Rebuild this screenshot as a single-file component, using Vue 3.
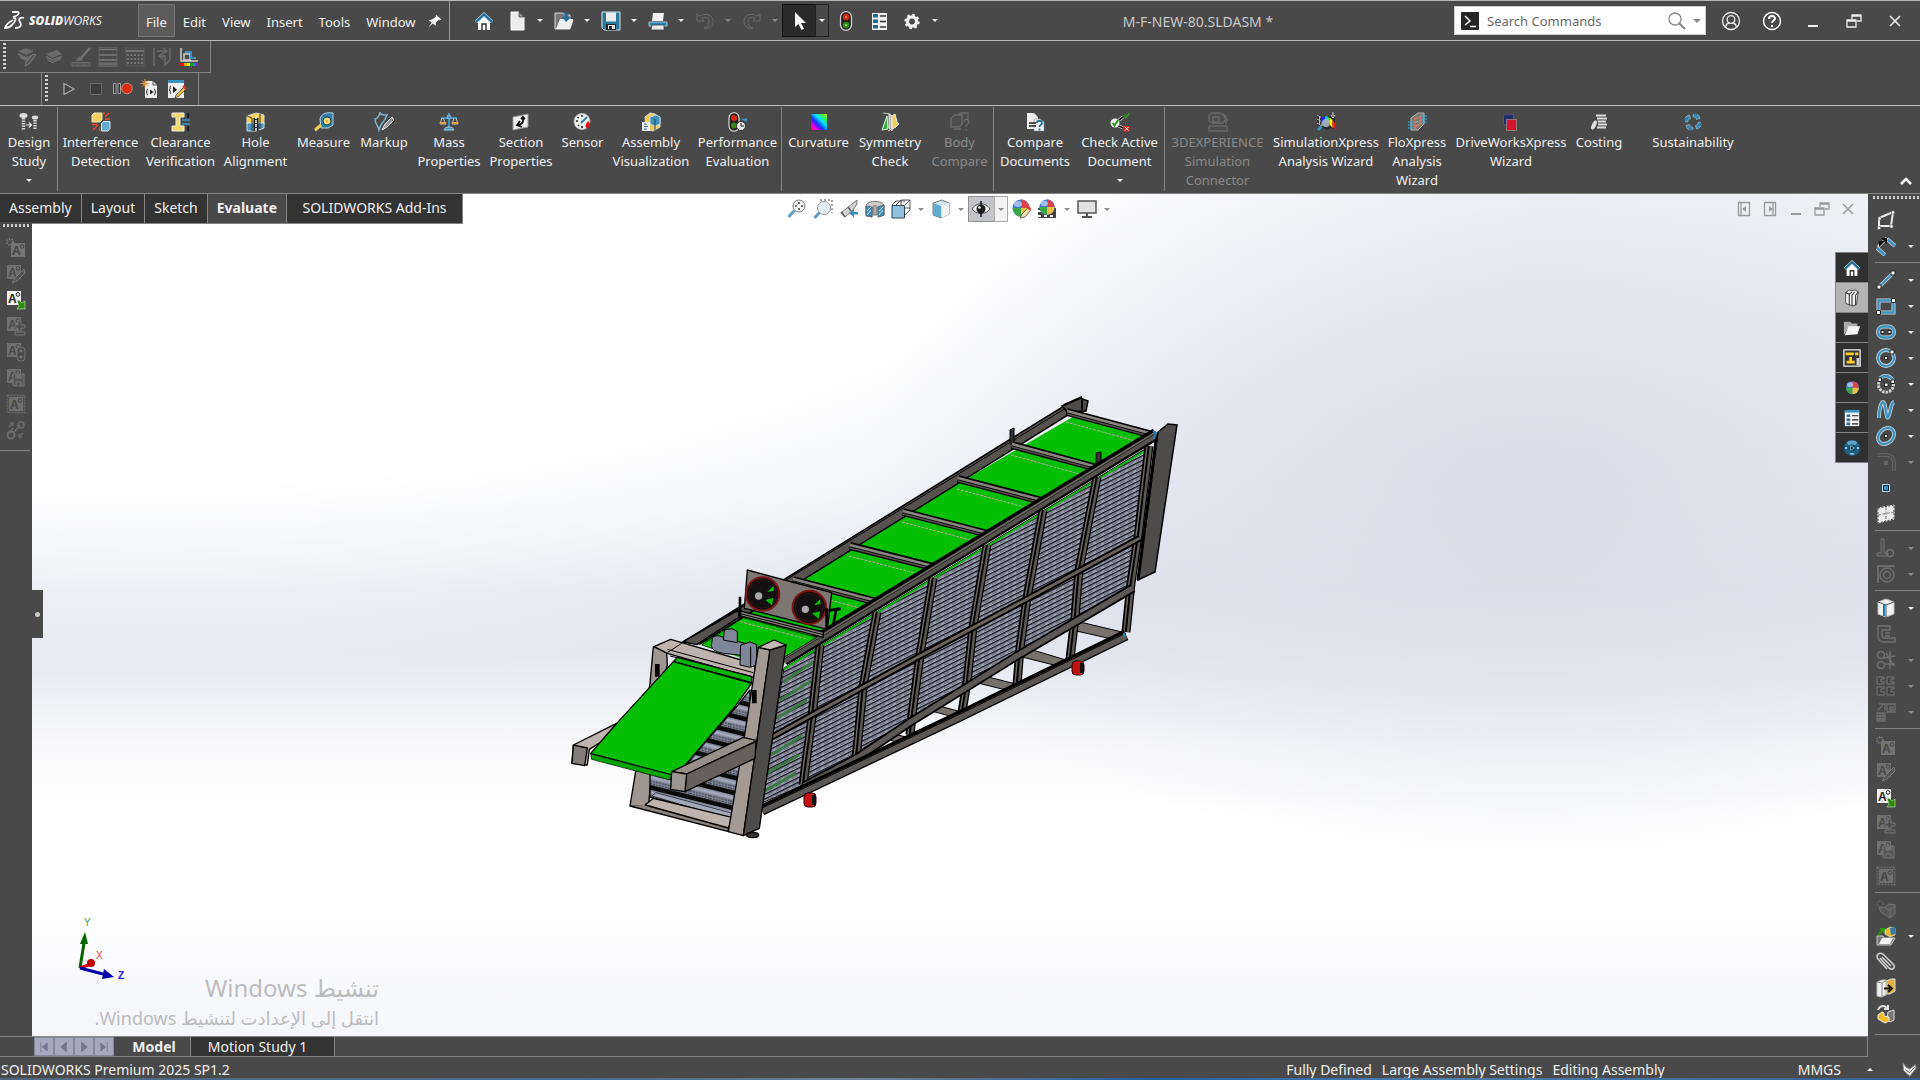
<script setup>
import { h } from 'vue'

const O = '#d2d2d2'
const B = '#3b93c4'
const noteBox = (x, y, fill, ink) =>
  `<rect x="${x}" y="${y}" width="14" height="14" fill="${fill}"/><text x="${x + 1}" y="${y + 12}" font-family="Liberation Sans" font-weight="bold" font-size="12" fill="${ink}">A</text><circle cx="${x + 11}" cy="${y + 3.5}" r="1.8" fill="none" stroke="${ink}"/>`
const balls = '<circle cx="10" cy="9" r="8.5" fill="#3e7bd0"/><path d="M10 9V.5A8.5 8.5 0 0 1 18.500 9z" fill="#d9434a"/><path d="M10 9H1.500A8.500 8.500 0 0 0 10 17.500z" fill="#3aa648"/><path d="M10 9h8.500A8.500 8.500 0 0 1 10 17.500z" fill="#e8bf4a"/><ellipse cx="7" cy="5" rx="4" ry="3" fill="#fff" opacity=".5"/>'

const icons = {
  home: `<path d="M4 10v9h12v-9l-6-6z" fill="#fff"/><path d="M8 19v-6h4v6" fill="none" stroke="#333" stroke-width="1.500"/><path d="M2 11L10 3.500l8 7.500" fill="none" stroke="#b5dcee" stroke-width="3.600"/><path d="M2 11L10 3.500l8 7.500" fill="none" stroke="#1f6a94" stroke-width="2.300"/>`,
  doc: `<path d="M4 1h8l5 5v13H4z" fill="#ececec" stroke="#fff"/><path d="M12 1v5h5z" fill="#999" stroke="#333" stroke-width=".7"/>`,
  open: `<path d="M1 2h9l1 2h5v5l3 0-3 9H1z" fill="#777" stroke="#ddd"/><path d="M2 18L6 8h13l-3 10z" fill="#eee"/><path d="M8 1c5 0 6 2 6 5h3l-5 5-4-5h3c0-3-1-4-3-5z" fill="#1c6e9e"/>`,
  save: `<path d="M1 1h18v18H3l-2-2z" fill="#2b789f" stroke="#cfe6f0" stroke-width="1"/><path d="M5 1.500h10v9H5z" fill="#eee"/><path d="M5 13h10v6H5z" fill="#222"/><path d="M7 14h7v4H7z" fill="#eee"/><path d="M8 15h3v3H8z" fill="#222"/>`,
  print: `<path d="M5 2h11l-1 8H4z" fill="#f2f2f2"/><path d="M1 11h18v4H1z" fill="#2f86b5" stroke="#b9dded" stroke-width=".8"/><path d="M4 14h12v5H3z" fill="#e8e8e8" stroke="#333" stroke-width=".7"/>`,
  undo: `<path d="M2 3v7h7L7 7c4-2 7 0 7 4s-2 5-5 6c6 1 9-2 9-7S12 1 5 5z" fill="#4a4a4a" stroke="#6b6b6b"/>`,
  redo: `<path d="M18 3v7h-7l2-3c-4-2-7 0-7 4s2 5 5 6c-6 1-9-2-9-7S8 1 15 5z" fill="#4a4a4a" stroke="#6b6b6b"/>`,
  cursor: `<path d="M6 1v15l3.500-3 3 6 2.500-1.200-3-5.800h5z" fill="#f4f4f4"/>`,
  light: `<rect x="4.500" y=".7" width="11" height="18.600" rx="5.500" fill="#222" stroke="#ccc" stroke-width="1.300"/><circle cx="10" cy="6" r="3.200" fill="#d8260f"/><circle cx="10" cy="14" r="3.200" fill="#2f8c16"/><circle cx="10" cy="6" r="1" fill="#ff9b80"/><circle cx="10" cy="14" r="1" fill="#9be078"/>`,
  options: `<path d="M3 2h15v17H3z" fill="#eee"/><path d="M4 3h5v3.500H4zM4 8.500h5V12H4zM4 14h5v3.500H4z" fill="#1f6a94"/><path d="M11 5h6M11 10.500h6M11 16h6" stroke="#333" stroke-width="1.300"/>`,
  gear: `<circle cx="10" cy="10.500" r="4.600" fill="none" stroke="#f2f2f2" stroke-width="3.400"/><circle cx="10" cy="10.500" r="6.600" fill="none" stroke="#f2f2f2" stroke-width="2.200" stroke-dasharray="2.590 2.590"/>`,
  pin: `<path d="M11 2l7 6-2 1-1-1-4 4 0 4-4-3-5 5 4-6-4-3 4-1 5-3z" fill="#fff"/>`,
  user: `<circle cx="10" cy="10" r="8.500" fill="none" stroke="#eee" stroke-width="1.300"/><circle cx="10" cy="8.500" r="3.800" fill="none" stroke="#eee" stroke-width="1.300"/><path d="M4.500 16c1-4 3-4 4-4M15.500 16c-1-4-3-4-4-4" fill="none" stroke="#eee" stroke-width="1.300"/>`,
  help: `<circle cx="10" cy="10" r="8.500" fill="none" stroke="#fff" stroke-width="1.500"/><path d="M7 8c0-4 6-4 6-.5 0 2-3 2-3 4.500M10 14v2" fill="none" stroke="#fff" stroke-width="2"/>`,
  min: `<path d="M5 15h10" stroke="currentColor" stroke-width="2"/>`,
  restore: `<path d="M8 8V4h9v6h-4M3 9h9v7H3zM8 5h9M3 10h9" fill="none" stroke="currentColor" stroke-width="1.300"/>`,
  close: `<path d="M5 5l10 10M15 5L5 15" stroke="currentColor" stroke-width="1.500"/>`,
  paneL: `<path d="M4.500 3.500h11v13h-11zM7 4v12" fill="none" stroke="currentColor" stroke-width="1.300"/><path d="M12 7v6l-4-3z" fill="currentColor"/>`,
  paneR: `<path d="M4.500 3.500h11v13h-11zM13 4v12" fill="none" stroke="currentColor" stroke-width="1.300"/><path d="M9 7v6l4-3z" fill="currentColor"/>`,
  prompt: `<rect x="1" y="1" width="18" height="18" rx="1" fill="#252525"/><path d="M5 5l5 5-5 4" fill="none" stroke="#fff" stroke-width="1.500"/><path d="M10 15.500h6" stroke="#fff" stroke-width="1.500"/>`,
  glass: `<circle cx="8" cy="8" r="6" fill="none" stroke="#888" stroke-width="1.300"/><path d="M12.500 12.500L18 18" stroke="#888" stroke-width="2.200"/>`,
  up: `<path d="M5 13l5-5 5 5" fill="none" stroke="#fff" stroke-width="2.500"/>`,
  // macro and layer strip
  layersEdit: `<path d="M1 4l8-3 8 3-8 4z" fill="#6a6a6a"/><path d="M1 7l8 4 5-2M3 10l6 3 3-1" fill="none" stroke="#707070" stroke-width="1.600"/><path d="M19 8l-7 9-4 2 1-4 7-8z" fill="#555" stroke="#7c7c7c"/>`,
  layers: `<path d="M2 7l11-4 5 4-10 4z" fill="#6a6a6a"/><path d="M2 9.500l6 3.500 10-3.500M3 12l5 3.500 9-4" fill="none" stroke="#707070" stroke-width="1.500"/>`,
  brush: `<path d="M19 1l-9 10" stroke="#777" stroke-width="2"/><path d="M11 10c-2-2-4 0-6 4h5c2-1 2-3 1-4z" fill="#6a6a6a"/><path d="M1 15.500h18v3.500H1z" fill="#555" stroke="#6b6b6b"/><path d="M7 15v4M13 15v4" stroke="#6b6b6b"/>`,
  thick: `<path d="M1 2.500h18M1 8h18M1 13h18" stroke="#7b7b7b" stroke-width="1.500"/><path d="M1 17h18" stroke="#6c6c6c" stroke-width="3"/><path d="M1 .5h18v19H1z" fill="none" stroke="#626262"/>`,
  dash: `<path d="M1 1h18v18H1z" fill="none" stroke="#5e5e5e"/><path d="M1 4h18" stroke="#747474" stroke-width="2"/><path d="M2 8h16M2 12h16M2 16h16" stroke="#747474" stroke-width="2" stroke-dasharray="2 1.500"/>`,
  swap: `<path d="M2 1v18M5 4h9M11 1l4 3-4 3M18 1v12l-5 5V9H8M11 6L7 9l4 3" fill="none" stroke="#6c6c6c" stroke-width="1.500"/>`,
  colorDisp: `<path d="M2 1v13h17M5 7h6v6H5z" fill="none" stroke="#cfcfcf" stroke-width="1.500"/><path d="M6 5h6v6h5" fill="none" stroke="${B}" stroke-width="2"/><path d="M1 16h4v3H1z" fill="#e11"/><path d="M5 16h3v3H5z" fill="#fa0"/><path d="M8 16h3v3H8z" fill="#ef0"/><path d="M11 16h3v3h-3z" fill="#1a2"/><path d="M14 16h2.500v3H14z" fill="#28e"/><path d="M16.500 16H19v3h-2.500z" fill="#82c"/>`,
  play: `<path d="M5 4.500v11l10-5.500z" fill="#444" stroke="#aaa" stroke-width="1.300"/>`,
  stop: `<path d="M4.500 4.500h11v11h-11z" fill="#3d3d3d" stroke="#6a6a6a"/>`,
  record: `<path d="M.5 4.500H3v10H.5zM5 4.500h2.500v10H5z" fill="#333" stroke="#bbb" stroke-width=".8"/><circle cx="14" cy="9.500" r="5.300" fill="#dd2b08" stroke="#bbb" stroke-width=".7"/>`,
  macroNew: `<path d="M5 2h8l4 4v13H5z" fill="#eee"/><path d="M13 2v4h4" fill="none" stroke="#555"/><path d="M5 0v9M.5 4.500h9M2 1.500l6 6M8 1.500l-6 6" stroke="#e8973a"/><path d="M8 10c-2 0 0 3-2 3 2 0 0 3 2 3M14 10c2 0 0 3 2 3-2 0 0 3-2 3" fill="none" stroke="#222"/><path d="M10 10.500v5l3.500-2.500z" fill="#222"/>`,
  macroEdit: `<path d="M1 2h16v17H1z" fill="#eee"/><path d="M1 1h16v3H1z" fill="${B}"/><path d="M6 7v7l4-3z" fill="#222"/><path d="M4 7c-2 0 0 3-1.500 4 1.500 1 0 4 1.500 4" fill="none" stroke="#222"/><path d="M17 8l-8 8-1 3 4-2 7-7z" fill="#f2c34c" stroke="#333" stroke-width=".7"/><path d="M16 7l3 3" stroke="#d33" stroke-width="2.500"/>`,
  // evaluate commands
  study: `<ellipse cx="4.500" cy="3.500" rx="4" ry="2.500" fill="#ddd"/><ellipse cx="16" cy="5.500" rx="3.200" ry="2" fill="#ddd"/><path d="M4.500 6v12M16 8v10" stroke="${O}" stroke-width="3.500" stroke-dasharray="1.500 1"/><path d="M7 13h5M10 10.500l2.500 2.500-2.500 2.500" fill="none" stroke="#eee" stroke-width="1.200"/>`,
  interf: `<path d="M1 3l2-2h8v7l-2 2H1z" fill="#f5cf60" stroke="#e9e3c4"/><path d="M10.500 11l2-1.500H19v7L17 19h-6.500z" fill="#65a9cf" stroke="#d3e8f2"/><path d="M14 5l4-4M14 7h5M13 3V0M7 13l-5 5M6 12.500H1M8.500 15v4" stroke="#f04a2a" stroke-width="1.300"/>`,
  clear: `<path d="M1 1h12v4H9v9h4v5H1v-5h4V5H1z" fill="#f5d765" stroke="#eee"/><path d="M11 8h8M11 12h8" stroke="${B}" stroke-width="1.500"/><path d="M17 1v5M17 19v-5" stroke="#111" stroke-width="1.500"/>`,
  hole: `<path d="M1 4l9-3 8 2v9H1z" fill="#f3cf50" stroke="#ddd"/><path d="M1 11h17v5l-8 3H1z" fill="#4b96c0" stroke="#cfe3ee"/><path d="M10 6v13" stroke="#222" stroke-width="5"/><path d="M10 4v15" stroke="#f4f4f4" stroke-width="1.500" stroke-dasharray="3 1"/><path d="M1 4l5 2v13M14 2v15" fill="none" stroke="#333"/>`,
  measure: `<path d="M6 7c1-5 6-7 13-6v12l-5 3H7z" fill="#2d7da8" stroke="#b8d8e6"/><circle cx="13" cy="9" r="4" fill="#f0dc88" stroke="#245"/><circle cx="13" cy="9" r="1.500" fill="#e9b93a"/><path d="M1 18l6-5" stroke="#f0c93b" stroke-width="3"/><path d="M1 19l6-5" stroke="#eee" stroke-dasharray="1 1"/>`,
  markup: `<path d="M6 1c2 3 4 2 7 2-1 3-2 5-4 7s-3 5-4 8c-1-5-4-6-4-11 3 0 4-3 5-6z" fill="none" stroke="#82b7d2" stroke-width="1.500"/><path d="M18 5l-7 7-3 6 5-3 7-7z" fill="#999" stroke="#eee"/>`,
  mass: `<path d="M10 1v14M2 6h16" stroke="${B}" stroke-width="2"/><circle cx="10" cy="5" r="2" fill="${B}" stroke="#cde" stroke-width=".6"/><path d="M5 18c1-4 9-4 10 0z" fill="${B}" stroke="#aed4e6"/><path d="M3 6l-2 6h6l-3-6M15 6l-2 6h6l-2-6" fill="none" stroke="#ddd" stroke-width=".8"/><path d="M.5 10h7c-1 3-6 3-7 0zM12.500 10h7c-1 3-6 3-7 0z" fill="#e3a342"/>`,
  section: `<path d="M2 5l15-3v13L2 18z" fill="#f0f0f0" stroke="#999"/><path d="M12 6v3c0 3-2 3-5 4M9 9l-3 4 5 2M10 7l2-2 2 2" fill="none" stroke="#111" stroke-width="1.800"/>`,
  sensor: `<circle cx="9" cy="9.500" r="8" fill="#eee" stroke="#bbb"/><path d="M9 3v2M3 9h2M4.500 5l1.200 1.200M5 14l1-1M9 16v-2" stroke="#222" stroke-width="1.500"/><path d="M8 11l6-6" stroke="#2d7da8" stroke-width="1.800"/><path d="M13 12l2-3c3 3 2 6 0 7s-3-2-2-4z" fill="#d11"/>`,
  asmViz: `<path d="M4 5l5-4 5 1 5 4v9l-7 4-7-2z" fill="#f2cb50" stroke="#ddd"/><path d="M9 5l6-2 4 2v7l-5 2-5-2z" fill="#3d8fb8" stroke="#b9d9e8"/><path d="M14 7v11" stroke="#246"/><path d="M1 10h8v9H1z" fill="#f2f2f2"/><path d="M3 12h3M3 14.500h4M3 17h3" stroke="#2d6da0"/>`,
  perf: `<rect x="1" y=".7" width="10" height="18.500" rx="5" fill="#222" stroke="#ccc" stroke-width="1.300"/><circle cx="6" cy="6" r="3" fill="#d8260f"/><circle cx="6" cy="13.500" r="3" fill="#2f8c16"/><circle cx="13" cy="14" r="4.500" fill="#e9e9e9" stroke="#333"/><path d="M13 11v3h3" fill="none" stroke="#111"/><path d="M11 7c3 0 6 2 8 3V6l-4 1z" fill="${B}"/>`,
  curv: `<defs><linearGradient id="rb" x1="1" y1="0" x2="0" y2="1"><stop offset="0" stop-color="#ffea00"/><stop offset=".2" stop-color="#3cf04a"/><stop offset=".4" stop-color="#00e0ff"/><stop offset=".6" stop-color="#1b2cff"/><stop offset=".8" stop-color="#ff00e0"/><stop offset="1" stop-color="#ff0030"/></linearGradient></defs><path d="M1.500 1.500h17v17h-17z" fill="url(#rb)" stroke="#444"/>`,
  sym: `<path d="M3 1l7 1v16l-2 1" fill="none" stroke="#ccc"/><path d="M9 2l3 2v15l-3-3z" fill="#b5b5b5" stroke="#eee"/><path d="M2 18L7 4l1 13z" fill="#30b040" stroke="#dfd"/><path d="M12 4l3-2 2 8 2 2-3 3-4 2z" fill="#f0cf5a" stroke="#eee"/>`,
  bodyCmp: `<path d="M1 6l4-3h7v9l-3 3H1zM8 3l3-2h7v9M14 10c0-4 5-3 5 0 0 2-3 2-3 5M16 17v2M4 17h7" fill="#4d4d4d" stroke="#6b6b6b" stroke-width="1.300"/>`,
  cmpDoc: `<path d="M2 1h7l4 4v12H2z" fill="#eee"/><path d="M9 7h6l4 3v9H9z" fill="#f6f6f6" stroke="#888" stroke-width=".6"/><path d="M4 11h7M4 14h7" stroke="#222" stroke-width="1.500"/><path d="M12 11c0-3 5-3 5 0 0 2-2.500 1.500-2.500 4M14.500 16.500v2" fill="none" stroke="#1c6ea0" stroke-width="1.800"/>`,
  chkDoc: `<circle cx="5" cy="11" r="4.500" fill="#f2f2f2"/><path d="M2.500 11l2 2.500L8 8M14 3l2 2.500L19.500 1" fill="none" stroke="#2a9a1a" stroke-width="2"/><path d="M9 8l4-3M9 14l4 2" stroke="#eee" stroke-width="3"/><path d="M9 8l4-3M9 14l4 2" stroke="#111" stroke-width="1.800"/><path d="M14 14h5.500v5.500H14z" fill="#d22"/><path d="M15 15l3.500 3.500M18.500 15L15 18.500" stroke="#fff"/>`,
  dx: `<path d="M1 3l3-2h8l3 2 3 4-3 4H4L1 9zM1 14h18v5H1zM5 5h6v5H5zM13 2c3 0 5 2 5 5M16 8l2 3 2-4" fill="#4d4d4d" stroke="#696969" stroke-width="1.300"/>`,
  simx: `<path d="M1 2l5 3 5 0 8-3v15l-5-1-3 2-4-2-6-3z" fill="#2b2b2b"/><path d="M1 3l5 3v8l-5-3M1 7l5 3M3.500 4v8" fill="none" stroke="#bbb"/><path d="M5 5h4v5H5z" fill="#22f"/><path d="M9 4.500h3V8H9z" fill="#0cf"/><path d="M12 5l2 1v6l-2-2z" fill="#2e2"/><path d="M14 6l2.500 2v8L14 13z" fill="#ff0"/><path d="M16.500 8L19 11v6l-2.500-2z" fill="#f22"/><circle cx="10" cy="11" r="4" fill="#a9bdca" opacity=".9"/><path d="M2 18l3.500-3.500" stroke="${B}" stroke-width="3"/><path d="M17 0v4M15 3l2 3 2-3" stroke="#ddd" fill="none"/>`,
  flox: `<path d="M4 6l7-5h6v11l-6 6H4z" fill="#77786f" stroke="#bbb"/><path d="M1 10h6M1 13h6M1 16h6M14 4h6M14 7h6M14 10h6" stroke="#28b4f0"/><path d="M7 7l8-3M7 11l8-3M7 15l8-4" stroke="#a0a898"/><path d="M8 7v9l5-4V5z" fill="none" stroke="#e06a5a" stroke-width="1.300"/>`,
  drive: `<path d="M2.500 2.500h10v10h-10z" fill="#23306e" stroke="#55608e" stroke-width=".6"/><path d="M5.500 7.500h10v11h-10z" fill="#d3142c" stroke="#999" stroke-width=".7"/>`,
  costing: `<path d="M7 3.500h10M8 6.500h10M7 9.500h10M9 12.500h9M8 15.500h9" stroke="#ddd" stroke-width="2"/><ellipse cx="5" cy="13" rx="2.600" ry="5.500" transform="rotate(25 5 13)" fill="#ddd" stroke="#444"/>`,
  sustain: `<g fill="#3a86ae" stroke="#a8d0e2" stroke-width=".6"><path id="sl" d="M10.500 1.500c4 0 6 2 6.500 5l-3.500 1c-.5-1.500-1.500-2.500-3.500-3z"/><path d="M10.500 1.500c4 0 6 2 6.500 5l-3.500 1c-.5-1.500-1.500-2.500-3.500-3z" transform="rotate(90 10 10)"/><path d="M10.500 1.500c4 0 6 2 6.500 5l-3.500 1c-.5-1.500-1.500-2.500-3.500-3z" transform="rotate(180 10 10)"/><path d="M10.500 1.500c4 0 6 2 6.500 5l-3.500 1c-.5-1.500-1.500-2.500-3.500-3z" transform="rotate(270 10 10)"/></g><circle cx="10" cy="10" r="8.500" fill="none" stroke="#1d4c66" stroke-dasharray="4 9.350"/>`,
  // heads-up view tools
  zoomFit: `<circle cx="12" cy="7" r="6" fill="#f4f4f4" stroke="#777"/><path d="M12 3v2M12 9v2M8 7h2M14 7h2" stroke="#444" stroke-width="1.600"/><path d="M7.500 11.500L1.500 18" stroke="#5f9fc4" stroke-width="3.200"/>`,
  zoomArea: `<path d="M7 1h12v13" fill="none" stroke="#555" stroke-dasharray="2 2"/><circle cx="11" cy="9" r="6.500" fill="#e8eef2" stroke="#999"/><path d="M6.500 13.500L1.500 19" stroke="#5f9fc4" stroke-width="3.200"/>`,
  prevView: `<path d="M18 1l-6 5-9 7 3 5 8-7 4-6z" fill="#d4d4d4" stroke="#777"/><path d="M2 13l4 5M9 8l3 4" stroke="#666" stroke-width="1.600"/><path d="M19 15.500h-4v3l-5-4.500 5-4v3h4z" fill="#3f8fbb"/>`,
  sectView: `<path d="M1 6c3-5 15-5 18 0v10l-5 2v-9H7v9l-6-1z" fill="#ccc" stroke="#777"/><path d="M8 8c0-2 4-2 4 0v8H8z" fill="#aaa" stroke="#777"/><path d="M1 7l6 1v10l-6-2zM13 8l6-2v10l-6 2z" fill="#3f8fbb" stroke="#567"/><path d="M2 12l4-4M2 16l4-5M14 16l4-5M14 12l4-4" stroke="#cde"/>`,
  orient: `<path d="M5 6l5-5h9v10l-5 5M14 6l5-5M1 6l4-4h9M10 1v5M14 9h5" fill="none" stroke="#555"/><path d="M1 6.500h12.500V19H1z" fill="#8ec3de" stroke="#345"/>`,
  dispStyle: `<path d="M2 4l9-3 7 3v11l-8 4-8-3z" fill="#cfe4ee" stroke="#777"/><path d="M2 4l8 3v12l-8-3z" fill="#62abd0"/><path d="M11 7l7-3v11l-7 4z" fill="#f1f1f1"/>`,
  eye: `<path d="M1 10c4-7 14-7 18 0-4 6-14 6-18 0z" fill="#eee" stroke="#555"/><circle cx="10" cy="10" r="4.500" fill="#222"/><path d="M10 2v16" stroke="#111" stroke-width="1.500"/><circle cx="8.500" cy="8.500" r="1.300" fill="#fff"/>`,
  appear: balls + `<path d="M18 8l-7 7-2 4 5-1 6-7z" fill="#f3e3a8" stroke="#444" stroke-width=".8"/><path d="M17 8l3 3" stroke="#d44" stroke-width="2.500"/>`,
  scene: `<path d="M1 9h18v10H1z" fill="#444"/><path d="M1 12h18M1 17h18" stroke="#fff" stroke-dasharray="3 3" stroke-width="2"/><g transform="translate(1 0) scale(.9)">${balls}</g>`,
  monitor: `<path d="M1 2h18v12H1z" fill="#e2e2e2" stroke="#555" stroke-width="1.500"/><path d="M10 14v3M5 18h10" stroke="#555" stroke-width="2"/>`,
  // annotation views
  nNew: noteBox(5, 5, '#747474', '#454545') + '<circle cx="4" cy="4" r="3" fill="none" stroke="#777" stroke-width="2" stroke-dasharray="1.500 1"/>',
  nEdit: noteBox(1, 1, '#707070', '#484848') + '<path d="M18 5l-9 9-3 5 5-2 8-8z" fill="#555" stroke="#7a7a7a"/>',
  nIns: noteBox(1, 1, '#f2f2f2', '#222') + '<path d="M11 11l2-1 3 3 3-2v8h-8l2-3z" fill="#2d8a0a" stroke="#cfe8c4" stroke-width=".6"/>',
  nAdd: noteBox(1, 1, '#707070', '#484848') + '<path d="M12 5h3v4h4v3h-4v3h-3v-3H9V9h3zM9 16h10v3H9z" fill="#4d4d4d" stroke="#777"/>',
  nLight: noteBox(1, 1, '#707070', '#484848') + '<rect x="11" y="5" width="8" height="14" rx="3.500" fill="#4a4a4a" stroke="#777"/><circle cx="15" cy="9" r="1.500" fill="#777"/><circle cx="15" cy="15" r="1.500" fill="#777"/>',
  nSave: noteBox(1, 1, '#707070', '#484848') + '<path d="M7 6h11v12H8l-1-1zM10 6v4h6V6M10 18v-4h5v4" fill="#555" stroke="#777"/>',
  nFrame: '<path d="M1.500 1.500h17v17h-17z" fill="none" stroke="#666" stroke-width="2" stroke-dasharray="2 1"/>' + noteBox(3, 3, '#6e6e6e', '#454545'),
  nLink: '<path d="M3 7l4-4M4 3h3v3M17 13l-4 4M16 17h-3v-3M8 12l6-7M7 8l-3 4" fill="none" stroke="#6c6c6c" stroke-width="1.500"/><circle cx="15" cy="5" r="3" fill="none" stroke="#6c6c6c" stroke-width="1.500"/><circle cx="5" cy="15" r="3.500" fill="none" stroke="#6c6c6c" stroke-width="2"/>',
  // sketch tools
  sketch: `<path d="M3 18V8l14-6-2 14H3z" fill="none" stroke="#eee" stroke-width="2"/><path d="M1.500 16.500h3v3h-3zM14 15h3v3h-3zM15.500 1h3v3h-3zM2 7h3v3H2z" fill="#fff" stroke="#555" stroke-width=".6"/>`,
  dim: `<path d="M1 12l8 7M11 3l8 7" stroke="${O}" stroke-width="4"/><path d="M1 12l8 7M11 3l8 7" stroke="${B}" stroke-width="2.600"/><path d="M2 11L11 2" stroke="${O}" stroke-width="3"/><path d="M3 11V5h6zM5 2h6v6z" fill="#111"/>`,
  line: `<path d="M3 17L17 3" stroke="${O}" stroke-width="3.800"/><path d="M3 17L17 3" stroke="${B}" stroke-width="2.200"/><path d="M1 15h4v4H1zM15 1h4v4h-4z" fill="#fff" stroke="#222"/>`,
  rect: `<path d="M2.500 4.500h15v12h-15z" fill="none" stroke="${O}" stroke-width="4"/><path d="M2.500 4.500h15v12h-15z" fill="none" stroke="${B}" stroke-width="2.400"/><path d="M.5 14.500h4v4h-4zM15.500 2.500h4v4h-4z" fill="#fff" stroke="#222"/>`,
  slot: `<rect x="2" y="4.500" width="16" height="11" rx="5.500" fill="none" stroke="${O}" stroke-width="4"/><rect x="2" y="4.500" width="16" height="11" rx="5.500" fill="none" stroke="${B}" stroke-width="2.400"/><path d="M5 8.500h3v3H5zM12 8.500h3v3h-3z" fill="#fff" stroke="#222"/>`,
  circle: `<circle cx="10" cy="10" r="8" fill="none" stroke="${O}" stroke-width="3.800"/><circle cx="10" cy="10" r="8" fill="none" stroke="${B}" stroke-width="2.200"/><path d="M8.500 8.500h3v3h-3zM14 2h4v4h-4z" fill="#fff" stroke="#222"/>`,
  arc: `<path d="M3 8a7.500 7.500 0 1 0 14 0" fill="none" stroke="${O}" stroke-width="3" stroke-dasharray="2.500 1"/><path d="M3 6c4-6 11-5 14 1" fill="none" stroke="${O}" stroke-width="3.800"/><path d="M3 6c4-6 11-5 14 1" fill="none" stroke="${B}" stroke-width="2.400"/><path d="M2 4h3.500v3.500H2zM8.500 9H12v3.500H8.500zM15 6h3.500v3.500H15z" fill="#fff" stroke="#222"/>`,
  spline: `<path d="M3 18C3 7 7-4 9 6s2 15 4 9 2-12 5-13" fill="none" stroke="${O}" stroke-width="4"/><path d="M3 18C3 7 7-4 9 6s2 15 4 9 2-12 5-13" fill="none" stroke="${B}" stroke-width="2.400"/>`,
  ellipse: `<ellipse cx="10" cy="10" rx="9" ry="7" transform="rotate(-45 10 10)" fill="none" stroke="${O}" stroke-width="3.800"/><ellipse cx="10" cy="10" rx="9" ry="7" transform="rotate(-45 10 10)" fill="none" stroke="${B}" stroke-width="2.200"/><path d="M8.500 8.500h3v3h-3z" fill="#fff" stroke="#222"/>`,
  fillet: `<path d="M1 3h8c6 0 9 3 9 8v8" fill="none" stroke="#6c6c6c" stroke-width="3.600"/><path d="M1 3h8c6 0 9 3 9 8v8" fill="none" stroke="#4d4d4d" stroke-width="2"/><path d="M8 9h4v4H8z" fill="#666"/>`,
  point: `<path d="M6.500 6.500h7v7h-7z" fill="${B}" stroke="#b7dcec"/><path d="M7.500 7.500h5v5h-5z" fill="none" stroke="#124"/>`,
  plane: `<path d="M2 4l16-3v14L2 19z" fill="#ececec" stroke="#fff"/><path d="M2 4l16-3v14L2 19z" fill="none" stroke="#333" stroke-dasharray="2 1.500"/><path d="M10 3v14M2 11l16-3" stroke="#777" stroke-dasharray="3 1.500"/>`,
  trim: `<path d="M5 1h3v14h4v3H1v-3h4z" fill="#4f4f4f" stroke="#727272"/><circle cx="14" cy="15" r="3.500" fill="none" stroke="#777" stroke-width="1.500"/>`,
  offset: `<path d="M1 2h18M2 1v18" stroke="#6c6c6c" stroke-width="2"/><circle cx="11" cy="11" r="7" fill="none" stroke="#6c6c6c" stroke-width="1.600"/><circle cx="11" cy="11" r="3.500" fill="none" stroke="#6c6c6c" stroke-width="1.600"/>`,
  cube: `<path d="M2 4l8-3 8 3v12l-8 3-8-3z" fill="#f0f0f0" stroke="#bbb"/><path d="M2 4l8 3 8-3M10 7v12" fill="none" stroke="#555"/><path d="M8 6v12" stroke="#1f7bb0" stroke-width="2"/>`,
  convert: `<path d="M14 2H2v10c0 4 3 6 6 6h11v-4H9c-2 0-3-1-3-3V6h8zM9 9h5M9 12h5" fill="none" stroke="#707070" stroke-width="1.400"/>`,
  mirror: `<circle cx="5" cy="5" r="3.500" fill="none" stroke="#727272" stroke-width="1.500"/><circle cx="5" cy="15" r="3.500" fill="none" stroke="#727272" stroke-width="1.500"/><path d="M14 1v18M8 8l11-2M8 14h11M10 3l8 13" stroke="#727272" stroke-width="1.500"/>`,
  pattern: `<path d="M1 1h7v2H5v3h3v2H1zM11 1h7v2h-3v3h3v2h-7zM1 11h7v2H5v3h3v3H1zM11 11h7v2h-3v3h3v3h-7z" fill="#444" stroke="#777"/>`,
  move: `<path d="M2 8l5-5M3 2h6v6M11 2h8v8h-8zM14 5h3v3h-3zM1 11h8v8H1zM4 11v8M7 11v8M1 14h8M1 17h8" fill="none" stroke="#6e6e6e" stroke-width="1.300"/>`,
  insDis: `<circle cx="4" cy="4" r="3" fill="none" stroke="#777" stroke-dasharray="1.500 1"/><path d="M3 8l6-1 4-3 6 1v9l-5 4-9-6z" fill="#585858" stroke="#737373"/><path d="M9 8l5 2 5-4M14 10v8" fill="none" stroke="#737373"/>`,
  insComp: `<path d="M1 10h6l1 2h9l2 0-4 7H1z" fill="#777" stroke="#ccc"/><path d="M3 18l3-6h11l-3 6z" fill="#f4f4f4"/><path d="M2 9l5-5M4 3h4v4" fill="none" stroke="#2c9a14" stroke-width="2.200"/><path d="M9 4l5-3 5 1v7l-5 2-5-3z" fill="#e9b83a" stroke="#eee" stroke-width=".6"/><path d="M14 2l5-1v7l-4 1z" fill="#2d7da8"/>`,
  clip: `<path d="M4 6l9 10c4 3 7-1 4-4L8 3C4-1-1 3 2 7l9 10M6 5l9 9" fill="none" stroke="#cfcfcf" stroke-width="1.600"/>`,
  repl: `<path d="M10 3l5-2h4v12l-5 3h-4z" fill="#e0b040" stroke="#ddd"/><path d="M1 4l5-2h4v15l-5 2-4-1z" fill="#f0f0f0" stroke="#bbb"/><path d="M1 4l5 1v13M6 5l4-2" fill="none" stroke="#888"/><path d="M8 10.500h6M12 7l4 3.500-4 3.500" fill="none" stroke="#111" stroke-width="2"/>`,
  rotate: `<path d="M2 6c2-5 7-5 9-2M12 1v4H8" fill="none" stroke="#ddd" stroke-width="2"/><path d="M12 8l6-2v10l-4 2-3-3z" fill="#777" stroke="#ddd"/><path d="M2 11l4-3 2 1v3l5 1v4l-4 2-7-4z" fill="#f2bb28" stroke="#eee"/>`,
  // task pane
  library: `<path d="M3 4l4-3 3 1 3-1 4 2-2 14-4 2-8-3z" fill="#f2f2f2" stroke="#444"/><path d="M3 4l4 2v12M7 6l3-3M10 7l3-4M10 7v12M14 7v11M14 7l3-4" fill="none" stroke="#333" stroke-width="1.200"/>`,
  folder: `<path d="M1 3h7l2 2h6v4H6L1 18z" fill="#aaa"/><path d="M2 18L6 8h13l-3 9z" fill="#f4f4f4"/>`,
  palette: `<path d="M1 1h18v18H1z" fill="#333" stroke="#eee" stroke-width="1.500"/><path d="M3 4h9v3H3zM13.500 4H17v3h-3.500zM7 9h3v4h3v3H4v-3h3z" fill="#ffcf1f"/><path d="M15 10h3v8h-3z" fill="#ccc"/>`,
  sphere: `<g transform="translate(2 2) scale(.85)">${balls}</g>`,
  props: `<path d="M2 2h16v17H2z" fill="#f2f2f2"/><path d="M2 1h16v3H2z" fill="${B}"/><path d="M4 6h4v3H4zM4 10.500h4v3H4zM4 15h4v3H4z" fill="#2c6f98"/><path d="M10 7.500h7M10 12h7M10 16.500h7" stroke="#222" stroke-width="1.300"/>`,
  forum: `<circle cx="10" cy="10" r="9" fill="#1e5f86"/><ellipse cx="10" cy="4.500" rx="5.500" ry="2.800" fill="#5da2c6"/><circle cx="10" cy="10" r="4" fill="#17506f"/><path d="M8.500 7.500v5l4-2.500z" fill="#123" stroke="#9ccbe0" stroke-width=".8"/><path d="M2.500 10h2M15.500 10h2M8 16.500h4" stroke="#d5ebf5" stroke-width="1.600"/>`,
  tag: `<path d="M3 3l4 5 4 2 6-5 1 4-7 9-7-6z" fill="#eee" stroke="#777"/><path d="M8 5l3 2M6 11l5 3 5-6" stroke="#555" fill="none"/>`,
}
const Ico = (p) => h('svg', { viewBox: '0 0 20 20', class: 'ico', 'aria-hidden': 'true', innerHTML: icons[p.n] })
Ico.props = ['n']

const menus = ['File', 'Edit', 'View', 'Insert', 'Tools', 'Window']
const quick = [
  { n: 'home', t: 'Home' }, { n: 'doc', t: 'New', d: 1 }, { n: 'open', t: 'Open', d: 1 }, { n: 'save', t: 'Save', d: 1 },
  { n: 'print', t: 'Print', d: 1 }, { n: 'undo', t: 'Undo', d: 1, off: 1 }, { n: 'redo', t: 'Redo', d: 1, off: 1 },
  { n: 'cursor', t: 'Select', d: 1, on: 1 }, { n: 'light', t: 'Rebuild' }, { n: 'options', t: 'File Properties' }, { n: 'gear', t: 'Options', d: 1 },
]
const strip1 = ['layersEdit', 'layers', 'brush', 'thick', 'dash', 'swap', 'colorDisp']
const strip2 = ['play', 'stop', 'record', 'macroNew', 'macroEdit']
const ribbon = [
  [{ n: 'study', l: ['Design', 'Study'], w: 56, d: 1 }],
  [
    { n: 'interf', l: ['Interference', 'Detection'], w: 83 }, { n: 'clear', l: ['Clearance', 'Verification'], w: 77 },
    { n: 'hole', l: ['Hole', 'Alignment'], w: 73 }, { n: 'measure', l: ['Measure'], w: 63 }, { n: 'markup', l: ['Markup'], w: 58 },
    { n: 'mass', l: ['Mass', 'Properties'], w: 72 }, { n: 'section', l: ['Section', 'Properties'], w: 72 }, { n: 'sensor', l: ['Sensor'], w: 51 },
    { n: 'asmViz', l: ['Assembly', 'Visualization'], w: 86 }, { n: 'perf', l: ['Performance', 'Evaluation'], w: 87 },
  ],
  [{ n: 'curv', l: ['Curvature'], w: 71 }, { n: 'sym', l: ['Symmetry', 'Check'], w: 72 }, { n: 'bodyCmp', l: ['Body', 'Compare'], w: 67, off: 1 }],
  [{ n: 'cmpDoc', l: ['Compare', 'Documents'], w: 80 }, { n: 'chkDoc', l: ['Check Active', 'Document'], w: 89, d: 1 }],
  [
    { n: 'dx', l: ['3DEXPERIENCE', 'Simulation', 'Connector'], w: 103, off: 1 }, { n: 'simx', l: ['SimulationXpress', 'Analysis Wizard'], w: 114 },
    { n: 'flox', l: ['FloXpress', 'Analysis', 'Wizard'], w: 68 }, { n: 'drive', l: ['DriveWorksXpress', 'Wizard'], w: 120 },
    { n: 'costing', l: ['Costing'], w: 56 }, { n: 'sustain', l: ['Sustainability'], w: 132 },
  ],
]
const tabs = ['Assembly', 'Layout', 'Sketch', 'Evaluate', 'SOLIDWORKS Add-Ins']
const headsUp = [
  { n: 'zoomFit' }, { n: 'zoomArea' }, { n: 'prevView' }, { n: 'sectView' }, { n: 'orient', d: 1 }, { n: 'dispStyle', d: 1 },
  { n: 'eye', d: 1, on: 1 }, { n: 'appear' }, { n: 'scene', d: 1 }, { n: 'monitor', d: 1 },
]
const leftTools = ['nNew', 'nEdit', 'nIns', 'nAdd', 'nLight', 'nSave', 'nFrame', 'nLink']
const t = (n, d = 0) => ({ n, d })
const rightTools = [
  [t('sketch'), t('dim', 1)],
  [t('line', 1), t('rect', 1), t('slot', 1), t('circle', 1), t('arc', 1), t('spline', 1), t('ellipse', 1), t('fillet', 2), t('point'), t('plane')],
  [t('trim', 2), t('offset', 2)],
  [t('cube', 1), t('convert'), t('mirror', 2), t('pattern', 2), t('move', 2)],
  [t('nNew'), t('nEdit'), t('nIns'), t('nAdd'), t('nSave'), t('nFrame')],
  [t('insDis'), t('insComp', 1), t('clip'), t('repl'), t('rotate')],
]
const taskPane = ['home', 'library', 'folder', 'palette', 'sphere', 'props', 'forum']

// conveyor geometry
const posts = [
  [820, 645, 812, 717, 803, 785, 803, 785], [877, 612, 863, 687, 857, 750, 855, 762], [933, 578, 920, 655, 912, 715, 910, 735],
  [987, 545, 973, 627, 967, 682, 962, 712], [1043, 510, 1027, 598, 1020, 648, 1017, 685], [1097, 477, 1079, 570, 1075, 617, 1070, 659],
  [1149, 446, 1138, 537, 1131, 583, 1126, 632],
]
const beams = [[1067, 412, 1153, 435], [1012, 445, 1097, 468], [958, 479, 1042, 501], [903, 512, 988, 534], [850, 546, 933, 567], [793, 580, 877, 602]]
</script>

<template>
  <div class="app">
    <header class="titlebar">
      <div class="brand">
        <svg class="mark" viewBox="0 0 22 22" aria-hidden="true">
          <path d="M8 2h6c2 1 0 4-5 5M9 8c4-1 3 3-1 7-2 2-5 3-7 3 1-4 4-6 8-8M20 8c-4-1-6 1-4 4s1 6-5 6" fill="none" stroke="#f2f2f2" stroke-width="1.800" />
        </svg>
        <span class="word"><b>SOLID</b>WORKS</span>
      </div>
      <nav class="menus">
        <button v-for="m in menus" :key="m" class="menu" :class="{ hot: m === 'File' }">{{ m }}</button>
        <button class="pin" aria-label="Pin menu"><Ico n="pin" /></button>
      </nav>
      <div class="quick">
        <div v-for="q in quick" :key="q.n" class="split" :class="{ on: q.on, off: q.off }">
          <button class="qbtn" :aria-label="q.t"><Ico :n="q.n" /></button>
          <button v-if="q.d" class="drop" :aria-label="q.t + ' menu'"><i class="tri"></i></button>
        </div>
      </div>
      <h1 class="doc">M-F-NEW-80.SLDASM *</h1>
      <div class="search">
        <Ico n="prompt" />
        <input type="text" placeholder="Search Commands" aria-label="Search Commands" />
        <Ico n="glass" />
        <i class="tri dim"></i>
      </div>
      <div class="sys">
        <button v-for="s in ['user', 'help', 'min', 'restore', 'close']" :key="s" :aria-label="s"><Ico :n="s" /></button>
      </div>
    </header>

    <div class="strips">
      <div class="strip first"><i class="grip"></i><button v-for="s in strip1" :key="s" :aria-label="s"><Ico :n="s" /></button></div>
      <div class="strip second"><i class="grip"></i><button v-for="s in strip2" :key="s" :aria-label="s"><Ico :n="s" /></button></div>
    </div>

    <div class="ribbon">
      <div v-for="(g, i) in ribbon" :key="i" class="group">
        <button v-for="c in g" :key="c.n" class="cmd" :class="{ off: c.off }" :style="{ width: c.w + 'px' }">
          <Ico :n="c.n" />
          <span v-for="l in c.l" :key="l">{{ l }}</span>
          <i v-if="c.d" class="tri"></i>
        </button>
      </div>
      <button class="collapse" aria-label="Collapse ribbon"><Ico n="up" /></button>
    </div>

    <div class="work">
      <div class="main">
        <div class="head">
          <div class="tabs">
            <button v-for="x in tabs" :key="x" :class="{ active: x === 'Evaluate' }">{{ x }}</button>
          </div>
          <div class="headsup">
            <div v-for="v in headsUp" :key="v.n" class="vsplit" :class="{ on: v.on }">
              <button class="vbtn" :aria-label="v.n"><Ico :n="v.n" /></button>
              <button v-if="v.d" class="vdrop" :aria-label="v.n + ' menu'"><i class="tri dim"></i></button>
            </div>
          </div>
          <div class="docctl">
            <button v-for="s in ['paneL', 'paneR', 'min', 'restore', 'close']" :key="s" :aria-label="'document ' + s"><Ico :n="s" /></button>
          </div>
        </div>
        <div class="stage">
          <aside class="left">
            <i class="grip h"></i>
            <button v-for="s in leftTools" :key="s" :aria-label="s"><Ico :n="s" /></button>
            <hr />
          </aside>
          <main class="canvas">
            <button class="flyout" aria-label="Show feature tree"></button>
            <svg class="model" viewBox="560 390 630 460" role="img" aria-label="Conveyor assembly">
              <defs>
                <pattern id="slats" width="40" height="4.700" patternUnits="userSpaceOnUse" patternTransform="skewY(-26.500)">
                  <rect width="40" height="5" fill="#999db1" /><rect width="40" height="1.400" fill="#0b0b0f" /><path d="M0 3h40" stroke="#3a3c48" stroke-width=".6" stroke-dasharray="5 3" />
                </pattern>
                <pattern id="rolls" width="60" height="46" patternUnits="userSpaceOnUse" patternTransform="skewY(14)">
                  <rect width="60" height="46" fill="#7f8596" /><rect y="4" width="60" height="9" fill="#a3a9bb" /><rect y="32" width="60" height="14" fill="#080808" /><path d="M0 20h60M0 28h60" stroke="#111" stroke-width="2.500" stroke-dasharray="5 4" />
                </pattern>
              </defs>
              <!-- belt -->
              <path d="M1076 415L1146 436L770 668L690 640Z" fill="#05bf05" />
              <g stroke="#b9a9a0" stroke-dasharray="3 1">
                <path v-for="(b, i) in beams" :key="i" :d="`M${b[0] - 1} ${b[1] + 10}L${b[2] - 14} ${b[3] + 7}`" />
                <path d="M738 622L808 640" />
              </g>
              <!-- rear rail -->
              <path d="M683 642L1064 406L1068 415L700 644Z" fill="#55524f" stroke="#000" stroke-width="1.500" />
              <path d="M688 640L1066 408" stroke="#000" />
              <path d="M1062 406L1080 398L1088 401L1086 411L1068 412Z" fill="#4e4c4a" stroke="#000" stroke-width="1.500" />
              <path d="M1064 405L1082 397M1082 400V410" stroke="#000" stroke-width="2" />
              <path d="M1010 444V430L1014 428V444ZM1096 468V453L1101 452V468Z" fill="#333" stroke="#000" />
              <!-- cross beams -->
              <g v-for="(b, i) in beams" :key="'b' + i">
                <path :d="`M${b[0]} ${b[1]}L${b[2]} ${b[3]}`" stroke="#000" stroke-width="8" />
                <path :d="`M${b[0]} ${b[1] - 1}L${b[2]} ${b[3] - 1}`" stroke="#8b8681" stroke-width="2.500" />
                <path :d="`M${b[0]} ${b[1] + 2}L${b[2]} ${b[3] + 2}`" stroke="#55524f" stroke-width="1.500" />
              </g>
              <!-- slatted side -->
              <path d="M784 668L1150 446L1134 583L803 785L762 803Z" fill="url(#slats)" stroke="#111" />
              <path d="M784 669L1148 449" stroke="#05bf05" stroke-width="1.800" />
              <g stroke="#3b7a43" stroke-width="3">
                <path d="M783 682L813 662M780 700L811 681M777 718L807 700M771 755L802 736M767 773L799 755M765 791L796 773" />
              </g>
              <!-- understructure -->
              <path d="M1080 622L1122 632L1112 639L1072 630ZM1026 648L1066 660L1058 666L1018 656ZM980 675L1016 684L1006 690L970 681ZM932 704L958 711L950 716L924 709ZM890 733L906 737L896 742L884 738Z" fill="#77726e" stroke="#000" />
              <g v-for="(p, i) in posts" :key="'p' + i" fill="none">
                <path :d="`M${p[0]} ${p[1]}L${p[2]} ${p[3]}L${p[4]} ${p[5]}L${p[6]} ${p[7]}`" stroke="#000" stroke-width="9" />
                <path :d="`M${p[0] - 2} ${p[1]}L${p[2] - 2} ${p[3]}L${p[4] - 2} ${p[5]}L${p[6] - 2} ${p[7]}`" stroke="#6e6863" stroke-width="1.500" />
                <path :d="`M${p[0] + 2} ${p[1]}L${p[2] + 2} ${p[3]}L${p[4] + 2} ${p[5]}L${p[6] + 2} ${p[7]}`" stroke="#5c5854" stroke-width="2.500" />
              </g>
              <g fill="none">
                <path d="M772 737L812 715L920 656L1027 599L1140 538" stroke="#000" stroke-width="7" />
                <path d="M772 737L812 715L920 656L1027 599L1140 538" stroke="#6a625d" stroke-width="3" />
                <path d="M804 786L857 758L912 721L967 687L1020 654L1075 622L1133 588" stroke="#000" stroke-width="9" />
                <path d="M804 786L857 758L912 721L967 687L1020 654L1075 622L1133 588" stroke="#5b5855" stroke-width="5.500" />
                <path d="M762 810L960 716L1126 635" stroke="#000" stroke-width="11" />
                <path d="M762 811L960 717L1126 636" stroke="#5b5855" stroke-width="6.500" />
                <path d="M762 808L960 714L1126 633" stroke="#000" />
                <path d="M784 660L1156 434" stroke="#000" stroke-width="12" />
                <path d="M784 658L1156 432" stroke="#6b6763" stroke-width="2" />
                <path d="M784 662L1156 436" stroke="#55524f" stroke-width="4" />
              </g>
              <path d="M1158 432L1168 424L1177 425L1155 572L1138 580Z" fill="#4e4c4a" stroke="#000" stroke-width="1.500" />
              <path d="M1157 433L1138 580" stroke="#000" stroke-width="3" />
              <path d="M1153 431l3 2-2 6M1124 633v4" stroke="#1c86c8" stroke-width="2" fill="none" />
              <g stroke="#300" fill="#c41212">
                <rect x="1072" y="661" width="12" height="14" rx="4" /><rect x="804" y="793" width="12" height="14" rx="4" />
              </g>
              <path d="M1082 663v10M814 795v10" stroke="#111" stroke-width="4" />
              <!-- near end -->
              <g transform="translate(550 550) scale(.33333)" stroke="#000" stroke-width="4" stroke-linejoin="round">
                <path d="M455 285L580 203L800 262L705 320L690 305L500 300Z" fill="#05bf05" stroke-width="2" />
                <path d="M570 215L775 268" stroke="#b9a9a0" stroke-width="3" stroke-dasharray="9 4" />
                <path d="M400 275L562 182L572 198L440 284Z" fill="#55524f" />
                <path d="M567 182L820 246V262L565 196Z" fill="#8b8681" />
                <path d="M567 190L820 254" stroke-width="3" />
                <path d="M592 60L845 128L832 238L583 175Z" fill="#7c7773" />
                <g v-for="c in [[638, 132], [778, 172]]" :key="c[0]">
                  <circle :cx="c[0]" :cy="c[1]" r="50" fill="#121010" stroke="#7d1414" stroke-width="6" />
                  <circle :cx="c[0]" :cy="c[1]" r="42" fill="none" stroke="#4e1010" stroke-width="2" />
                  <path :d="`M${c[0] + 8} ${c[1] + 18}l24 -6 -4 22zM${c[0] + 14} ${c[1] - 6}l18 -18 2 14z`" fill="#05bf05" stroke="none" />
                  <circle :cx="c[0] - 12" :cy="c[1] + 6" r="11" fill="#a9a9a9" stroke="none" />
                </g>
                <path d="M570 140V210M830 175V240M850 225L858 180L872 176M835 182L868 176" fill="none" stroke-width="8" />
                <path d="M310 290L350 305L352 345L330 420L295 770L240 768L300 400Z" fill="#9f9690" />
                <path d="M300 650L480 560L560 470L600 420L600 560L545 800L300 742Z" fill="url(#rolls)" />
                <path d="M305 738L318 728L548 790L545 808Z" fill="#a3a9bb" stroke-width="2" />
                <path d="M285 765L310 745L545 802L535 838Z" fill="#bfb3ad" />
                <path d="M240 768L536 845L535 834L285 765" fill="#8b837d" />
                <path d="M312 290L362 268L615 342V385L352 310Z" fill="#bfb3ad" />
                <path d="M352 308L395 280M360 318L608 380M352 298L610 368" fill="none" stroke-width="3" />
                <g fill="#80869a" stroke-width="3">
                  <path d="M488 262Q500 252 520 262L590 282V318L520 310Q484 305 484 285Z" />
                  <path d="M523 240L545 236L562 244V278L520 270Z" /><path d="M572 285L600 276L620 284V345L600 352L570 345Z" />
                  <path d="M602 290V350" />
                </g>
                <path d="M625 292L660 300L580 857L535 845L583 560Z" fill="#a39a94" />
                <path d="M660 300L708 285L628 835L580 857Z" fill="#4e4c4a" />
                <path d="M625 292L672 270L708 285L660 300Z" fill="#c4b9b3" />
                <path d="M613 420V460M322 342V380" stroke="#050505" stroke-width="14" />
                <path d="M70 585L200 520L150 578L118 598L112 645L66 640Z" fill="#bfb3ad" />
                <path d="M70 585L112 594L104 647L66 640Z" fill="#837d79" />
                <path d="M382 322L605 380V398L370 335Z" fill="#05b505" />
                <path d="M370 335L605 400L555 470L400 652L365 675L122 610L205 515Z" fill="#05bf05" />
                <path d="M122 612L365 675L360 690L125 628Z" fill="#05a505" stroke-width="2" />
                <path d="M553 474L415 640" stroke-width="2" />
                <path d="M365 665L580 562L622 572L410 672Z" fill="#969089" />
                <path d="M410 672L618 574L615 625L405 725Z" fill="#675f5b" />
                <path d="M365 665L410 672L405 725L362 718Z" fill="#9b9591" />
                <ellipse cx="608" cy="855" rx="18" ry="8" fill="#333" />
              </g>
            </svg>
            <svg class="triad" viewBox="0 0 60 70" aria-label="Axes" role="img">
              <path d="M11 55L15 30" stroke="#060" stroke-width="3" /><path d="M11 31l5-12 3 12z" fill="#060" />
              <path d="M11 55L22 51" stroke="#d00" stroke-width="3" /><circle cx="22" cy="50" r="4" fill="#c00000" />
              <path d="M11 55L34 61" stroke="#0000a8" stroke-width="3" /><path d="M35 56l10 8-12 2z" fill="#0000a8" />
              <g font-family="Liberation Sans" font-size="10"><text x="15" y="13" fill="#4ba04b">Y</text><text x="27" y="46" fill="#f04040">X</text><text x="49" y="66" fill="#2020e0" font-weight="bold">Z</text></g>
            </svg>
            <div class="watermark" dir="rtl" lang="ar">
              <p class="big">تنشيط Windows</p>
              <p class="small">انتقل إلى الإعدادت لتنشيط Windows.</p>
            </div>
            <div class="taskpane">
              <button v-for="s in taskPane" :key="s" :class="{ on: s === 'library' }" :aria-label="s"><Ico :n="s" /></button>
            </div>
          </main>
        </div>
        <div class="bottom">
          <div class="nav">
            <button v-for="(d, i) in ['M6 4v12M14 5v10L8 10z', 'M13 4v12l-7-6z', 'M7 4v12l7-6z', 'M14 4v12M6 5v10l6-5z']" :key="i" :aria-label="'Tab scroll ' + (i + 1)">
              <svg viewBox="0 0 20 20" class="navico"><path :d="d" fill="#74768e" stroke="#74768e" /></svg>
            </button>
          </div>
          <button class="btab model-tab">Model</button>
          <button class="btab motion">Motion Study 1</button>
        </div>
      </div>
      <aside class="right">
        <i class="grip h"></i>
        <div v-for="(g, i) in rightTools" :key="i" class="rgroup">
          <div v-for="(r, j) in g" :key="j" class="rrow">
            <button class="rbtn" :aria-label="r.n"><Ico :n="r.n" /></button>
            <button v-if="r.d" class="rdrop" :class="{ off: r.d === 2 }" :aria-label="r.n + ' menu'"><i class="tri"></i></button>
          </div>
        </div>
      </aside>
    </div>

    <footer class="status">
      <span class="ver">SOLIDWORKS Premium 2025 SP1.2</span>
      <span>Fully Defined</span><span>Large Assembly Settings</span><span>Editing Assembly</span>
      <button class="units">MMGS</button><i class="tri upw"></i><Ico n="tag" />
    </footer>
    <div class="desk"></div>
  </div>
</template>

<style>
body { background: #494949; }
</style>
<style scoped>
* { box-sizing: border-box; }
.app { min-height: 100vh; display: flex; flex-direction: column; background: #494949; color: #f0f0f0; font: 13px/19px "Noto Sans", "Open Sans", sans-serif; overflow: hidden; }
button { border: 0; padding: 0; margin: 0; background: none; color: inherit; font: inherit; display: flex; align-items: center; justify-content: center; white-space: nowrap; }
.ico { width: 20px; height: 20px; flex: none; display: block; }
.tri { width: 0; height: 0; border: 3px solid transparent; border-top-color: #f0f0f0; border-bottom: 0; flex: none; }
.tri.dim { border-top-color: #8a8a8a; }
.off .tri { border-top-color: #8a8a8a; }
.tri.upw { border: 3px solid transparent; border-bottom-color: #f0f0f0; border-top: 0; }
.grip { display: block; width: 3px; height: 28px; background: repeating-linear-gradient(#d0d0d0 0 2px, transparent 2px 4px); flex: none; }
.grip.h { width: auto; height: 3px; background: repeating-linear-gradient(90deg, #d0d0d0 0 2px, transparent 2px 4px); }

.titlebar { height: 41px; display: flex; align-items: center; border-top: 1px solid #b4b8b4; border-bottom: 1px solid #bcbcbc; }
.brand { width: 138px; padding-left: 4px; display: flex; align-items: center; gap: 3px; }
.mark { width: 22px; height: 22px; }
.word { font: italic 12px/16px "Open Sans", sans-serif; color: #f4f4f4; }
.word b { font-weight: 800; }
.menus { display: flex; align-items: center; height: 100%; border-right: 1px solid #9a9a9a; padding-right: 2px; width: 312px; }
.menu { height: 33px; padding: 3px 8px 0; }
.menu.hot { background: #5c5c5c; box-shadow: inset 0 0 0 1px #777; }
.pin { flex: 1; }
.pin .ico { width: 16px; height: 16px; }
.quick { display: flex; padding-left: 17px; }
.split { display: flex; height: 33px; }
.qbtn { width: 33px; }
.drop { width: 14px; }
.split.on { background: #2a2a2a; box-shadow: inset 0 0 0 1px #111; }
.split.on .drop { background: #494949; border: 1px solid #222; }
.doc { flex: 1; text-align: center; margin: 0; padding-top: 2px; font-size: 14px; font-weight: 400; color: #c8c8c8; }
.search { width: 252px; height: 29px; background: #fff; border: 1px solid #ccc; display: flex; align-items: center; padding: 0 4px 0 5px; gap: 6px; }
.search input { flex: 1; min-width: 0; border: 0; outline: 0; padding: 1px 0 0 1px; background: none; color: #444; font: inherit; }
.search input::placeholder { color: #6a6a6a; opacity: 1; }
.search .tri { border-width: 4px; border-bottom: 0; }
.sys { display: flex; padding: 0 5px 0 4px; }
.sys button { width: 41px; height: 33px; }

.strips { height: 65px; border-bottom: 1px solid #bcbcbc; }
.strip { display: flex; align-items: center; height: 32px; border: 1px solid #858585; border-width: 0 1px 1px 0; }
.strip.first { width: 211px; padding-left: 3px; }
.strip.first button { width: 27px; }
.strip.first .grip { margin-right: 7px; }
.strip.second { width: 158px; margin-left: 41px; border-width: 0 1px; padding-left: 3px; }
.strip.second .grip { margin-right: 7px; }
.strip.second button { width: 27px; }

.ribbon { display: flex; height: 88px; border-bottom: 1px solid #858585; position: relative; }
.group { display: flex; padding: 0 0 0 1px; margin: 1px 0 2px; border-right: 1px solid #858585; }
.group:nth-last-child(2) { border: 0; }
.cmd { flex-direction: column; justify-content: flex-start; padding-top: 5px; height: 84px; }
.cmd span { line-height: 19px; }
.cmd .ico { margin-bottom: 1px; }
.cmd .tri { margin-top: 8px; }
.cmd.off { color: #8a8a8a; }
.collapse { position: absolute; right: 4px; bottom: 2px; }

.work { display: flex; flex: 1; }
.main { flex: 1; min-width: 0; display: flex; flex-direction: column; background:
  radial-gradient(ellipse 36% 44% at 82% 34%, rgba(217, 221, 233, .95), rgba(221, 224, 236, .6) 50%, rgba(226, 229, 239, 0)),
  radial-gradient(ellipse 75% 56% at 8% 0%, #fff 60%, rgba(255, 255, 255, 0)),
  linear-gradient(#f2f3f7 0%, #e7eaf2 35%, #dfe3ed 46%, #e5e8f0 53%, #f9f9fb 64%, #fff 72%, #fff 82%, #f3f4f8 100%); }
.head { height: 28px; display: grid; grid-template-columns: 1fr auto 1fr; padding-left: 29px; }
.tabs { display: flex; margin-left: -29px; font-size: 14px; width: 463px; border-bottom: 1px solid #858585; }
.tabs button { background: #333; border-right: 1px solid #858585; padding: 0 9px 2px; }
.tabs .active { background: #494949; font-weight: 700; }
.tabs button:last-child { flex: 1; }
.headsup { display: flex; padding-top: 2px; }
.vsplit { display: flex; height: 26px; }
.vbtn { width: 26px; }
.vdrop { width: 14px; }
.vsplit.on { background: #c4c5c9; box-shadow: inset 0 0 0 1px #8f8f8f; }
.vsplit.on .vdrop { background: #f2f2f2; border: 1px solid #aaa; }
.docctl { display: flex; justify-content: flex-end; padding-right: 7px; color: #999; }
.docctl button { width: 26px; height: 30px; }
.stage { flex: 1; display: flex; }
.left { width: 32px; background: #494949; display: flex; flex-direction: column; padding-top: 2px; flex: none; }
.left .grip { margin: 0 2px 8px 3px; }
.left button { height: 26px; }
.left hr { width: 30px; margin: 7px 0 0; border: 0; border-top: 1px solid #858585; }
.canvas { flex: 1; position: relative; }
.flyout { position: absolute; left: 0; top: 368px; width: 11px; height: 48px; background: #494949; }
.flyout::after { content: ""; width: 5px; height: 5px; border-radius: 50%; background: #ccc; }
.model { position: absolute; left: 528px; top: 168px; width: 630px; height: 460px; }
.triad { position: absolute; left: 37px; top: 691px; width: 60px; height: 70px; }
.watermark { position: absolute; left: 0; width: 347px; bottom: 4px; color: #bcbcbe; font-family: "Noto Sans", "DejaVu Sans", sans-serif; white-space: nowrap; }
.watermark p { margin: 0; }
.big { font-size: 24px; line-height: 32px; }
.small { font-size: 18px; line-height: 28px; }
.taskpane { position: absolute; right: 0; top: 30px; width: 33px; border: 1px solid #858585; border-width: 1px 0 0 1px; }
.taskpane button { width: 32px; height: 30px; background: #303030; border-bottom: 1px solid #858585; }
.taskpane .ico { width: 18px; height: 18px; }
.taskpane .on { background: #b4b4b4; }
.bottom { height: 21px; display: flex; background: #494949; border: 1px solid #858585; border-width: 1px 1px 1px 0; padding-left: 34px; font-size: 14px; }
.nav { display: flex; }
.nav button { width: 20px; background: #a6a8bd; border: 1px solid #8587a0; }
.navico { width: 16px; height: 16px; }
.btab { border-right: 1px solid #858585; height: 19px; }
.model-tab { width: 77px; padding-left: 4px; font-weight: 700; }
.motion { width: 144px; background: #333; padding-right: 10px; }
.right { width: 52px; flex: none; background: #494949; padding-top: 2px; }
.right .grip { margin-left: 5px; }
.rgroup { border-bottom: 1px solid #858585; padding: 4px 0 3px; margin-left: 7px; }
.grip + .rgroup { padding-top: 8px; }
.rgroup:last-child { padding-bottom: 7px; }
.rrow { display: flex; height: 26px; }
.rbtn { width: 22px; }
.rdrop { width: 18px; margin-left: 5px; }

.status { height: 21px; display: flex; align-items: center; font-size: 14px; padding: 3px 2px 0 1px; gap: 10px; }
.ver { flex: 1; }
.units { margin-left: 123px; }
.status .tri { margin: 0 17px 0 16px; }
.status .ico { width: 18px; height: 18px; }
.desk { height: 2px; background: linear-gradient(90deg, #55667e, #3f6d95 30%, #6f8196 45%, #1f5f9f 60%, #4c7fae 75%, #2f6093); }
</style>
